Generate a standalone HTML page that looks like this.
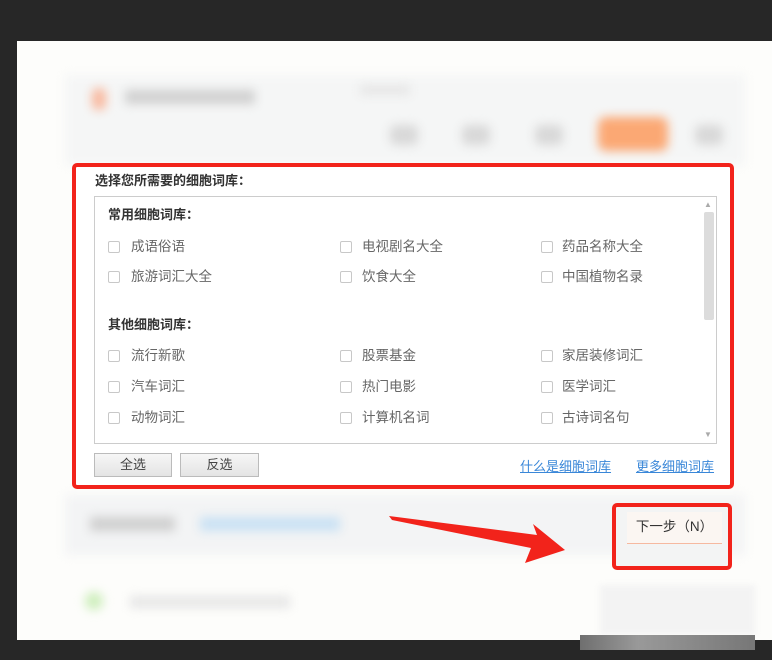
<!DOCTYPE html>
<html><head><meta charset="utf-8"><style>
*{margin:0;padding:0;box-sizing:border-box}
body{width:772px;height:660px;background:#272727;position:relative;overflow:hidden;font-family:"Liberation Sans","Noto Sans CJK SC",sans-serif;font-size:13px;color:#555}
.abs{position:absolute}
.white{left:17px;top:41px;width:755px;height:599px;background:#fdfdfb}
.blur{filter:blur(5px)}
.cb{position:absolute;width:12px;height:12px;border:1px solid #c8c8c8;border-radius:2px;background:#fff}
.t{position:absolute;font-size:13.5px;color:#666;line-height:16px}
.h{position:absolute;font-size:13px;color:#333;font-weight:bold;line-height:16px}
.btn{position:absolute;border:1px solid #bbb;background:linear-gradient(#f6f6f6,#e4e4e4);font-size:13px;color:#444;text-align:center;line-height:22px}
.lnk{position:absolute;color:#3a87d8;text-decoration:underline;font-size:13px}
</style></head><body>
<div class="abs white"></div>
<div class="abs blur" style="left:65px;top:75px;width:680px;height:90px;background:#f5f6f6"></div>
<div class="abs blur" style="left:92px;top:88px;width:14px;height:22px;background:#f8b89e;border-radius:6px"></div>
<div class="abs blur" style="left:125px;top:90px;width:130px;height:14px;background:#d0d0d0"></div>
<div class="abs blur" style="left:360px;top:85px;width:50px;height:10px;background:#e6e6e6"></div>
<div class="abs blur" style="left:390px;top:125px;width:28px;height:20px;background:#d8d8d8;border-radius:6px"></div>
<div class="abs blur" style="left:462px;top:125px;width:28px;height:20px;background:#d8d8d8;border-radius:6px"></div>
<div class="abs blur" style="left:535px;top:125px;width:28px;height:20px;background:#d8d8d8;border-radius:6px"></div>
<div class="abs blur" style="left:598px;top:117px;width:70px;height:34px;background:#fba874;border-radius:8px"></div>
<div class="abs blur" style="left:695px;top:125px;width:28px;height:20px;background:#d8d8d8;border-radius:6px"></div>
<div class="abs blur" style="left:65px;top:495px;width:680px;height:60px;background:#f3f4f5"></div>
<div class="abs blur" style="left:90px;top:517px;width:85px;height:14px;background:#cfcfcf"></div>
<div class="abs blur" style="left:200px;top:517px;width:140px;height:14px;background:#c9e1f3"></div>
<div class="abs blur" style="left:85px;top:592px;width:18px;height:18px;background:#cdeebb;border-radius:50%"></div>
<div class="abs blur" style="left:130px;top:596px;width:160px;height:12px;background:#e6e6e6"></div>
<div class="abs" style="left:600px;top:585px;width:155px;height:50px;background:#f3f3f3;filter:blur(3px)"></div>
<div class="abs" style="left:580px;top:635px;width:175px;height:15px;background:linear-gradient(90deg,#6f6f6f,#999,#888,#777)"></div>

<div class="abs" style="left:72px;top:163px;width:662px;height:326px;background:#fff;border:4px solid #f2231b;border-radius:5px"></div>
<div class="h" style="left:95px;top:173px">选择您所需要的细胞词库：</div>
<div class="abs" style="left:94px;top:196px;width:623px;height:248px;border:1px solid #ccc;background:#fff"></div>
<div class="abs" style="left:704px;top:212px;width:10px;height:108px;background:#dcdcdc;border-radius:2px"></div>
<div class="abs" style="left:704px;top:200px;font-size:8px;color:#aaa">▲</div>
<div class="abs" style="left:704px;top:430px;font-size:8px;color:#aaa">▼</div>
<div class="h" style="left:108px;top:207px">常用细胞词库：</div>
<div class="h" style="left:108px;top:317px">其他细胞词库：</div>

<div class="cb" style="left:108px;top:241px"></div><div class="t" style="left:131px;top:239px">成语俗语</div>
<div class="cb" style="left:340px;top:241px"></div><div class="t" style="left:362px;top:239px">电视剧名大全</div>
<div class="cb" style="left:541px;top:241px"></div><div class="t" style="left:562px;top:239px">药品名称大全</div>
<div class="cb" style="left:108px;top:271px"></div><div class="t" style="left:131px;top:269px">旅游词汇大全</div>
<div class="cb" style="left:340px;top:271px"></div><div class="t" style="left:362px;top:269px">饮食大全</div>
<div class="cb" style="left:541px;top:271px"></div><div class="t" style="left:562px;top:269px">中国植物名录</div>

<div class="cb" style="left:108px;top:350px"></div><div class="t" style="left:131px;top:348px">流行新歌</div>
<div class="cb" style="left:340px;top:350px"></div><div class="t" style="left:362px;top:348px">股票基金</div>
<div class="cb" style="left:541px;top:350px"></div><div class="t" style="left:562px;top:348px">家居装修词汇</div>
<div class="cb" style="left:108px;top:381px"></div><div class="t" style="left:131px;top:379px">汽车词汇</div>
<div class="cb" style="left:340px;top:381px"></div><div class="t" style="left:362px;top:379px">热门电影</div>
<div class="cb" style="left:541px;top:381px"></div><div class="t" style="left:562px;top:379px">医学词汇</div>
<div class="cb" style="left:108px;top:412px"></div><div class="t" style="left:131px;top:410px">动物词汇</div>
<div class="cb" style="left:340px;top:412px"></div><div class="t" style="left:362px;top:410px">计算机名词</div>
<div class="cb" style="left:541px;top:412px"></div><div class="t" style="left:562px;top:410px">古诗词名句</div>

<div class="btn" style="left:94px;top:453px;width:78px;height:24px">全选</div>
<div class="btn" style="left:180px;top:453px;width:79px;height:24px">反选</div>
<div class="lnk" style="left:520px;top:456px">什么是细胞词库</div>
<div class="lnk" style="left:636px;top:456px">更多细胞词库</div>

<div class="abs" style="left:612px;top:503px;width:120px;height:67px;border:4px solid #f2231b;border-radius:5px;background:#f3f4f4"></div>
<div class="abs" style="left:627px;top:512px;width:95px;height:32px;background:#fbf6f2;border-bottom:1px solid #f6b9a0;font-size:13.5px;color:#333;text-align:center;line-height:30px">下一步（N）</div>

<svg class="abs" style="left:0;top:0" width="772" height="660"><polygon points="389,516 537,535 533,524 565,550 525,563 531,548 392,520" fill="#f2231b"/></svg>
</body></html>
